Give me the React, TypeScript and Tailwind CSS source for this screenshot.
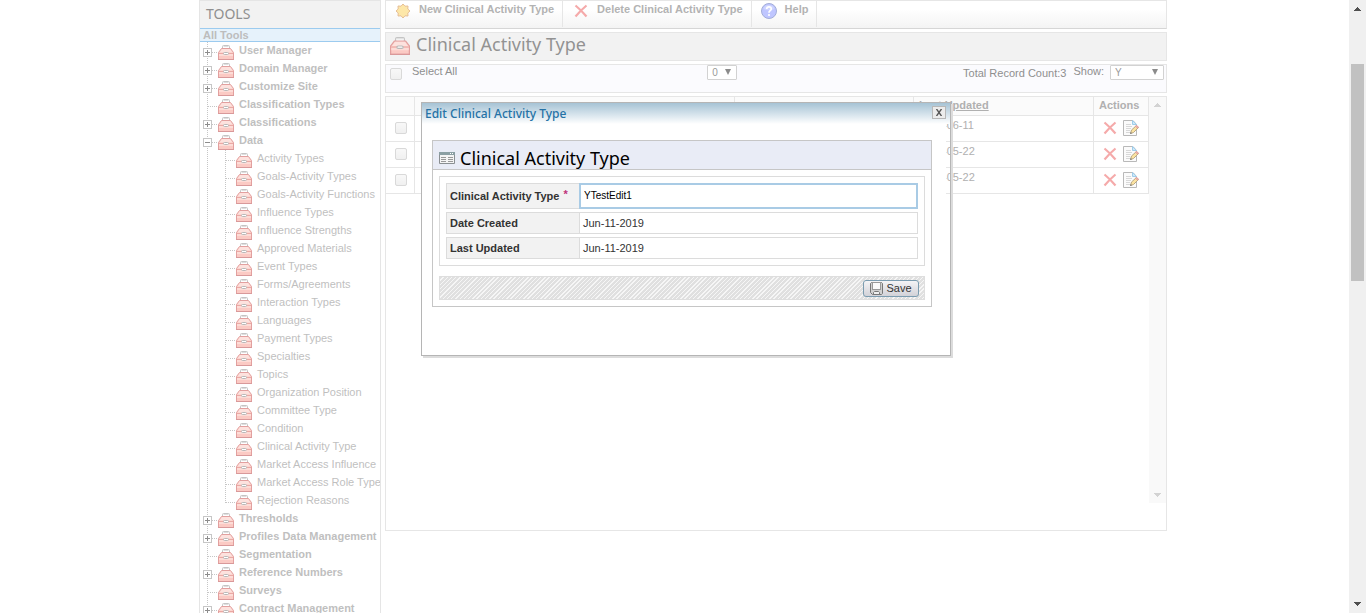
import { useState } from "react";

type Kind = "plus" | "minus" | "none";
type Node = { label: string; kind: Kind; children?: string[] };

const tree: Node[] = [
  { label: "User Manager", kind: "plus" },
  { label: "Domain Manager", kind: "plus" },
  { label: "Customize Site", kind: "plus" },
  { label: "Classification Types", kind: "none" },
  { label: "Classifications", kind: "plus" },
  {
    label: "Data",
    kind: "minus",
    children: [
      "Activity Types",
      "Goals-Activity Types",
      "Goals-Activity Functions",
      "Influence Types",
      "Influence Strengths",
      "Approved Materials",
      "Event Types",
      "Forms/Agreements",
      "Interaction Types",
      "Languages",
      "Payment Types",
      "Specialties",
      "Topics",
      "Organization Position",
      "Committee Type",
      "Condition",
      "Clinical Activity Type",
      "Market Access Influence",
      "Market Access Role Type",
      "Rejection Reasons",
    ],
  },
  { label: "Thresholds", kind: "plus" },
  { label: "Profiles Data Management", kind: "plus" },
  { label: "Segmentation", kind: "none" },
  { label: "Reference Numbers", kind: "plus" },
  { label: "Surveys", kind: "none" },
  { label: "Contract Management", kind: "plus" },
];

const rows = ["2019-06-11", "2019-05-22", "2019-05-22"];

function Toolbox({ className }: { className: string }) {
  return (
    <svg viewBox="0 0 16 15" preserveAspectRatio="none" className={className} aria-hidden="true">
      <path d="M4.500 3.500V1.500Q4.500.5 5.500.5h5q1 0 1 1V3.500" fill="#fff" stroke="#c4c4c4" />
      <path d="M5.500 1.500h5" stroke="#dedede" />
      <path d="M3.500 3.500h9l3 4v7H.5v-7z" fill="#fbcac4" stroke="#e2a09f" />
      <path d="M4 4h8l2.400 3.500H1.600z" fill="#fde2de" />
      <path d="M1 8.500h14" stroke="#eaa9a4" />
      <path d="M1 9.500h14M1 10.500h14" stroke="#fddcd7" />
      <path d="M0 14.500h16" stroke="#d9999a" />
      <rect x="5.500" y="7.500" width="5" height="2" rx="1" fill="#fff" stroke="#b9b9b9" />
    </svg>
  );
}

function Gutter({ kind, branch = true, last = false }: { kind: Kind; branch?: boolean; last?: boolean }) {
  return (
    <svg viewBox="0 0 18 18" className="h-[18px] w-[18px] shrink-0" aria-hidden="true">
      <path d={last ? "M7.500 0V11" : "M7.500 0V18"} stroke="#c6c6c6" strokeDasharray="1 1" />
      {branch && <path d="M8 10.500H18" stroke="#c6c6c6" strokeDasharray="1 1" />}
      {kind !== "none" && (
        <>
          <rect x="3.500" y="6.500" width="8" height="8" fill="#fff" stroke="#c6c6c6" />
          <path d="M5 10.500h5" stroke="#8c8c8c" />
          {kind === "plus" && <path d="M7.500 8v5" stroke="#8c8c8c" />}
        </>
      )}
    </svg>
  );
}

function DeleteIcon({ className }: { className: string }) {
  return (
    <svg viewBox="0 0 14 14" className={className} aria-hidden="true">
      <path d="M1.500 1.500Q7 6 12.500 12.500M12.500 1.500Q7 6 1.500 12.500" fill="none" stroke="#f5aaaa" strokeWidth="2.200" />
    </svg>
  );
}

function EditIcon() {
  return (
    <svg viewBox="0 0 16 16" className="h-4 w-4" aria-hidden="true">
      <path d="M.5.5h9.500l3.500 4v11H.5z" fill="#fbfbfb" stroke="#b9b9b9" />
      <path d="M9.500.5v4h4z" fill="#cfe8f8" stroke="#9fcdea" />
      <path d="M3 4.500h5M3 6.500h6M3 8.500h5M3 10.500h4M3 12.500h4" stroke="#d8d8d8" />
      <path d="M7.500 13.500l1-3.500 5-4.500 2 2-5 5z" fill="#fbe3a0" stroke="#b8a682" />
      <path d="M12.500 6.200l1-1 2 2-1 1z" fill="#f3b6b2" stroke="#e0a09c" />
      <path d="M7 14l.7-2 1.300 1.300z" fill="#777" />
    </svg>
  );
}

function SunIcon() {
  return (
    <svg viewBox="0 0 16 16" className="h-4 w-4" aria-hidden="true">
      <path
        d="M8 1L10 3.200 13 3 12.800 6 15 8 12.800 10 13 13 10 12.800 8 15 6 12.800 3 13 3.200 10 1 8 3.200 6 3 3 6 3.200z"
        fill="#fde7a8"
        stroke="#e6bf96"
      />
    </svg>
  );
}

function HelpIcon() {
  return (
    <svg viewBox="0 0 16 16" className="h-4 w-4" aria-hidden="true">
      <circle cx="8" cy="8" r="7.500" fill="#bfc6ff" stroke="#a3aed8" />
      <path d="M2.500 6a5.600 5 0 0 1 11 0q-5 2.500-11 0z" fill="#cfd5ff" />
      <path d="M5.700 6Q5.700 3.800 8 3.800T10.300 6Q10.300 7 9 7.800 8 8.500 8 9.800" fill="none" stroke="#fff" strokeWidth="1.700" />
      <circle cx="8" cy="12" r="1.100" fill="#fff" />
    </svg>
  );
}

function Caret({ up = false, className }: { up?: boolean; className: string }) {
  return (
    <svg viewBox="0 0 7 4" className={className} shapeRendering="crispEdges" aria-hidden="true">
      <path d={up ? "M3 0h1v1h1v1h1v1h1v1H0V3h1V2h1V1h1z" : "M0 0h7v1H6v1H5v1H4v1H3V3H2V2H1V1H0z"} fill="currentColor" />
    </svg>
  );
}

function Picker({ label, value, className }: { label: string; value: string; className: string }) {
  return (
    <span className={`relative flex h-[15px] ${className}`}>
      <select
        aria-label={label}
        defaultValue={value}
        className="w-full appearance-none rounded-[1px] border border-[#d2d2d2] bg-white pl-1 text-[10px] leading-[13px] text-[#9a9a9a]"
      >
        <option>{value}</option>
      </select>
      <svg viewBox="0 0 6 6" className="pointer-events-none absolute top-1 right-[6px] h-[6px] w-[6px]" aria-hidden="true">
        <path d="M0 0h6L3 6z" fill="#8b8b8b" />
      </svg>
    </span>
  );
}

const box =
  "m-0 block h-3 w-3 appearance-none rounded-[2px] border border-[#d9d9d9] bg-gradient-to-b from-[#f8f8f8] to-[#f0f0f0]";

function Sidebar() {
  return (
    <nav className="w-[182px] shrink-0 overflow-hidden border-x border-t border-[#e5e5e5]">
      <h2 className="h-[27px] bg-[#f2f2f2] pl-[6px] font-['Trebuchet_MS','Noto_Sans',sans-serif] text-[14px] leading-[25px] text-[#8f8f8f]">
        TOOLS
      </h2>
      <a
        href="#all"
        className="block h-[14px] border-y border-[#9ccbef] bg-[#e6f2fb] pl-[3px] text-[11px] leading-[13px] font-bold text-[#bdbdbd]"
      >
        All Tools
      </a>
      <ul className="text-[11px] leading-4 whitespace-nowrap text-[#bfbfbf]">
        {tree.map((n) => (
          <li key={n.label}>
            <a href="#tool" className="flex h-[18px] font-bold">
              <Gutter kind={n.kind} />
              <Toolbox className="mt-[3px] mr-[5px] h-[15px] w-4 shrink-0" />
              {n.label}
            </a>
            {n.children && (
              <ul>
                {n.children.map((c, i) => (
                  <li key={c}>
                    <a href="#tool" className="flex h-[18px]">
                      <Gutter kind="none" branch={false} />
                      <Gutter kind="none" last={i === n.children!.length - 1} />
                      <Toolbox className="mt-[3px] mr-[5px] h-[15px] w-4 shrink-0" />
                      {c}
                    </a>
                  </li>
                ))}
              </ul>
            )}
          </li>
        ))}
      </ul>
    </nav>
  );
}

function Main() {
  const tool = "flex h-[26px] items-start border-r border-[#e6e6e6] pr-2 text-[11px] leading-4 font-bold text-[#b3b3b3]";
  return (
    <main className="flex min-w-0 flex-1 flex-col gap-[3px]">
      <div className="flex h-[29px] border border-b-[#d6d6d6] border-[#e6e6e6] bg-gradient-to-b from-white from-30% to-[#f4f4f4]">
        <button className={`${tool} gap-2 pl-[9px]`}>
          <span className="pt-[2px]"><SunIcon /></span>
          New Clinical Activity Type
        </button>
        <button className={`${tool} gap-[9px] pl-[11px]`}>
          <span className="pt-[3px]"><DeleteIcon className="h-[14px] w-[14px]" /></span>
          Delete Clinical Activity Type
        </button>
        <button className={`${tool} gap-2 pl-[9px]`}>
          <span className="pt-[2px]"><HelpIcon /></span>
          Help
        </button>
      </div>
      <div className="flex h-[29px] border border-[#e6e6e6] bg-[#f2f2f2] pl-1">
        <Toolbox className="mt-1 h-[18px] w-5" />
        <h1 className="pl-[6px] font-['Trebuchet_MS','Noto_Sans',sans-serif] text-[18px] leading-[22px] text-[#929292]">
          Clinical Activity Type
        </h1>
      </div>
      <div className="flex h-[29px] items-start border border-[#e6e6e6] bg-[#fbfbfe] pr-[2px] pl-1 text-[11px] leading-[14px] text-[#8f8f8f]">
        <div className="flex w-[41%] gap-[10px]">
          <input id="all" type="checkbox" className={`${box} mt-[3px]`} />
          <label htmlFor="all" className="leading-3">Select All</label>
        </div>
        <Picker label="Page" value="0" className="w-[30px]" />
        <div className="flex flex-1 justify-end gap-[6px]">
          <span className="pt-px">Total Record Count:3</span>
          <span className="pl-px leading-3">Show:</span>
          <Picker label="Show" value="Y" className="w-[54px]" />
        </div>
      </div>
      <div className="flex h-[435px] items-start border border-[#e6e6e6]">
        <table className="flex-1 table-fixed border-collapse text-left text-[11px] leading-[18px] text-[#b0b0b0]">
          <colgroup>
            <col className="w-[28px]" />
            <col />
            <col className="w-[179px]" />
            <col className="w-[180px]" />
            <col className="w-[55px]" />
          </colgroup>
          <thead>
            <tr className="h-[18px] border-b border-[#e6e6e6] bg-[#fbfbfb]">
              <th className="border-r border-[#e6e6e6] p-0" />
              <th className="border-r border-[#e6e6e6] p-0" />
              <th className="border-r border-[#e6e6e6] p-0" />
              <th className="border-r border-[#e6e6e6] p-0 pl-[5px] leading-[17px] underline">Last Updated</th>
              <th className="border-r border-[#e6e6e6] p-0 pl-[5px] leading-[17px]">Actions</th>
            </tr>
          </thead>
          <tbody>
            {rows.map((date, i) => (
              <tr key={i} className="h-[26px] border-b border-[#e6e6e6]">
                <td className="border-r border-[#e6e6e6] p-0 pl-[9px]">
                  <input type="checkbox" aria-label={`Row ${i + 1}`} className={box} />
                </td>
                <td className="p-0" />
                <td className="p-0" />
                <td className="border-r border-[#e6e6e6] p-0 pl-[5px] align-top">{date}</td>
                <td className="border-r border-[#e6e6e6] p-0 pb-px">
                  <div className="flex items-center gap-[6px] pl-[9px]">
                    <button aria-label="Delete"><DeleteIcon className="block h-[14px] w-[14px]" /></button>
                    <button aria-label="Edit"><EditIcon /></button>
                  </div>
                </td>
              </tr>
            ))}
          </tbody>
        </table>
        <div className="flex h-[406px] w-[17px] flex-col items-center justify-between bg-[#f9f9f9] py-[6px] text-[#d3d3d3]">
          <Caret up className="h-1 w-[7px]" />
          <Caret className="h-1 w-[7px]" />
        </div>
      </div>
    </main>
  );
}

function Dialog() {
  const [name, setName] = useState("YTestEdit1");
  const label = "flex w-[134px] shrink-0 items-center border border-[#dcdcdc] bg-[#f2f2f2] pl-[3px] font-bold";
  return (
    <section
      role="dialog"
      aria-labelledby="dialog-title"
      className="absolute top-[102px] left-[222px] w-[530px] border border-[#b5b5b5] text-[11px] text-[#333] shadow-[2px_2px_0_#dcdcdc]"
    >
      <header className="flex h-[21px] items-start justify-between bg-gradient-to-b from-[#a6c3d5] to-white pr-1 pl-[3px]">
        <h2
          id="dialog-title"
          className="font-['Trebuchet_MS','Noto_Sans',sans-serif] text-[12px] leading-[22px] font-medium text-[#2572a6]"
        >
          Edit Clinical Activity Type
        </h2>
        <button
          aria-label="Close"
          className="mt-[3px] flex h-[13px] w-[14px] items-center justify-center border border-[#b8b8b8] bg-[#ececec]"
        >
          <svg viewBox="0 0 6 7" className="h-[7px] w-[6px]" aria-hidden="true">
            <path d="M.5 0L5.500 7M5.500 0L.5 7" stroke="#555" strokeWidth="1.400" />
          </svg>
        </button>
      </header>
      <div className="mr-1 bg-white pt-4 pr-[14px] pb-12 pl-[10px]">
        <form className="border border-[#c6c6c6]" onSubmit={(e) => e.preventDefault()}>
          <div className="flex h-[29px] items-center gap-[5px] border-b border-[#c6c6c6] bg-[#e9ecf6] pt-[6px] pl-[6px]">
            <svg viewBox="0 0 16 12" className="h-3 w-4" aria-hidden="true">
              <path d="M.5.5h15v11H.5z" fill="#f4f4f4" stroke="#8a8f92" />
              <path d="M0 1.500h16" stroke="#8b9fa3" strokeWidth="3" />
              <path d="M11 1.500h1M13 1.500h1" stroke="#fff" />
              <path d="M2 5.500h5M2 7.500h5M2 9.500h5M9 5.500h5M9 7.500h5M9 9.500h5" stroke="#999" />
            </svg>
            <h3 className="font-['Trebuchet_MS','Noto_Sans',sans-serif] text-[18px] leading-5 text-black">Clinical Activity Type</h3>
          </div>
          <div className="p-[6px]">
            <div className="flex flex-col gap-[3px] border border-[#dcdcdc] p-[6px]">
              <div className="flex h-[26px]">
                <label htmlFor="name" className={label}>
                  Clinical Activity Type<span className="pb-1 pl-1 text-[#c0307a]">*</span>
                </label>
                <input
                  id="name"
                  value={name}
                  onChange={(e) => setName(e.target.value)}
                  className="-ml-px min-w-0 flex-1 border-2 border-[#a9cbe5] bg-white pb-[2px] pl-[3px] text-[10px] text-black outline-none"
                />
              </div>
              {["Date Created", "Last Updated"].map((l) => (
                <div key={l} className="flex h-[22px]">
                  <span className={label}>{l}</span>
                  <span className="flex flex-1 items-center border border-l-0 border-[#dcdcdc] pl-[3px]">Jun-11-2019</span>
                </div>
              ))}
            </div>
            <div className="mt-[10px] flex h-6 items-center justify-end border border-[#dedede] bg-[repeating-linear-gradient(135deg,#e0e0e0_0px,#e0e0e0_2px,#f6f6f6_2px,#f6f6f6_3px)] pr-[5px]">
              <button className="flex h-[17px] w-14 items-center justify-center gap-[3px] rounded-[3px] border border-[#7b9cb0] bg-gradient-to-b from-[#f4f4f6] to-[#d2d2d8] text-[11px] leading-[14px]">
                <svg viewBox="0 0 13 13" className="h-[13px] w-[13px]" aria-hidden="true">
                  <path d="M1.500.5h10l1 1v10l-1 1h-9l-2-2v-9z" fill="#d0d0d0" stroke="#777" />
                  <rect x="2.500" y=".5" width="8" height="7" fill="#fafafa" stroke="#999" />
                  <path d="M3.500 12.500v-2l1-1h4l1 1v2z" fill="#eee" stroke="#777" />
                </svg>
                Save
              </button>
            </div>
          </div>
        </form>
      </div>
    </section>
  );
}

export default function App() {
  return (
    <div className="flex h-screen overflow-hidden bg-white font-['Liberation_Sans',Arial,sans-serif]">
      <div className="flex-1" />
      <div className="relative flex w-[968px] items-start gap-1">
        <Sidebar />
        <Main />
        <Dialog />
      </div>
      <div className="flex flex-1 justify-end">
        <div className="flex w-[17px] flex-col items-center bg-[#f0f0f0] py-[7px] text-[#4f4f4f]">
          <Caret up className="h-1 w-[7px]" />
          <div className="mt-[53px] h-[217px] w-[13px] bg-[#c1c1c1]" />
          <Caret className="mt-auto h-1 w-[7px]" />
        </div>
      </div>
    </div>
  );
}
